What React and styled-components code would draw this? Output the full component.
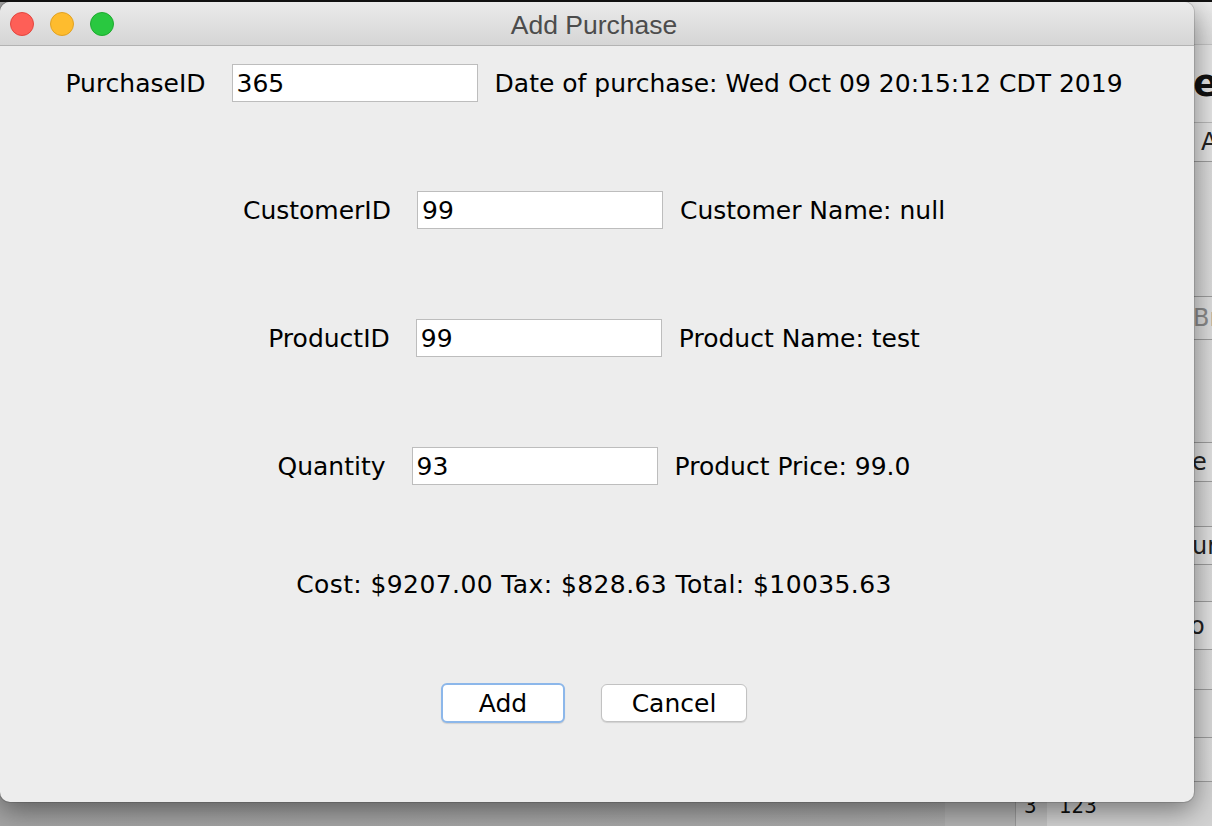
import React from "react";
import styled, { createGlobalStyle } from "styled-components";

const Global = createGlobalStyle`
  html, body { margin: 0; padding: 0; }
  body { width: 1212px; height: 826px; overflow: hidden; background: #a6a6a6; }
`;

const Desktop = styled.div`
  position: relative;
  width: 1212px;
  height: 826px;
  overflow: hidden;
  background: linear-gradient(90deg, #a4a4a4 0%, #a9a9a9 70%, #b4b4b4 100%);
  border-top: 2px solid #111;
  box-sizing: border-box;
`;

/* background application window, mostly hidden behind the dialog */
const BackWindow = styled.div`
  position: absolute;
  left: 945px;
  top: -2px;
  width: 320px;
  height: 840px;
  background: linear-gradient(90deg, #b8b8b8, #d8d8d8);
  display: flex;
  flex-direction: column;
  font-family: "DejaVu Sans", sans-serif;
`;

const BackTitle = styled.div`
  height: 44px;
  flex: none;
  background: linear-gradient(#ececec, #dcdcdc);
  border-bottom: 1px solid #c4c4c4;
`;

const BackHeading = styled.div`
  height: 77px;
  flex: none;
  background: #e4e4e4;
  border-bottom: 1px solid #b8b8b8;
  font-size: 38px;
  font-weight: bold;
  line-height: 77px;
  padding-left: 248px;
  color: #111;
  white-space: nowrap;
`;

const BackRow = styled.div`
  height: ${(p) => p.$h}px;
  flex: none;
  box-sizing: border-box;
  border-bottom: 1px solid #9c9c9c;
  background: ${(p) => p.$bg || "linear-gradient(90deg, #c9c9c9, #dedede)"};
  color: ${(p) => (p.$muted ? "#8a8a8a" : "#222")};
  font-size: 24px;
  line-height: ${(p) => p.$h}px;
  padding-left: ${(p) => p.$pad || 250}px;
  white-space: nowrap;
`;

const BackTable = styled.div`
  flex: 1;
  display: flex;
  background: linear-gradient(90deg, #b4b4b4 0, #b4b4b4 70px, #c9c9c9 70px);
`;

const BackCell = styled.div`
  width: ${(p) => p.$w}px;
  flex: none;
  box-sizing: border-box;
  border-left: ${(p) => (p.$line ? "1px solid #9a9a9a" : "none")};
  background: ${(p) => p.$bg};
  padding: 11px 0 0 ${(p) => p.$pl}px;
  font-family: "DejaVu Sans Condensed", "DejaVu Sans", sans-serif;
  font-size: 22px;
  color: #111;
`;

const Dialog = styled.div`
  position: absolute;
  left: 0;
  top: 0;
  width: 1194px;
  height: 800px;
  background: #ededed;
  border-radius: 10px;
  box-shadow: 0 8px 28px rgba(0, 0, 0, 0.45), 0 0 0 1px rgba(0, 0, 0, 0.12);
  display: flex;
  flex-direction: column;
  overflow: hidden;
`;

const TitleBar = styled.div`
  height: 44px;
  flex: none;
  position: relative;
  display: flex;
  align-items: center;
  justify-content: center;
  background: linear-gradient(#ebebeb, #d5d5d5);
  border-bottom: 1px solid #b3b3b3;
  box-sizing: border-box;
`;

const Lights = styled.div`
  position: absolute;
  left: 10px;
  top: 10px;
  display: flex;
  gap: 16px;
`;

const Light = styled.span`
  width: 24px;
  height: 24px;
  border-radius: 50%;
  box-sizing: border-box;
  background: ${(p) => p.$c};
  border: 1px solid ${(p) => p.$b};
`;

const Title = styled.div`
  font-family: "Liberation Sans", Arial, sans-serif;
  font-size: 26.5px;
  color: #4c4c4c;
  margin: 4px 0 0 -6px;
`;

const Content = styled.div`
  flex: 1;
  display: flex;
  flex-direction: column;
  align-items: center;
  padding: 18px 6px 0 0;
  font-family: "DejaVu Sans", "Lucida Grande", sans-serif;
  font-size: 25px;
  color: #000;
`;

const Row = styled.div`
  display: flex;
  align-items: center;
  height: ${(p) => p.$h || 38}px;
  margin-top: ${(p) => p.$mt || 0}px;
  white-space: nowrap;
  letter-spacing: ${(p) => p.$ls || 0}px;
`;

const Label = styled.span`
  margin-right: 26px;
`;

const Field = styled.div`
  width: 246px;
  height: 38px;
  box-sizing: border-box;
  background: #fff;
  border: 1px solid #bdbdbd;
  display: flex;
  align-items: center;
  padding-left: 4px;
  margin-right: 17px;
`;

const Buttons = styled.div`
  display: flex;
  gap: 36px;
  margin-top: 80px;
  align-items: center;
`;

const Button = styled.button`
  width: ${(p) => p.$w}px;
  height: ${(p) => (p.$focus ? 40 : 38)}px;
  box-sizing: border-box;
  background: #fff;
  border: ${(p) => (p.$focus ? "2px solid #8cb7ea" : "1px solid #c2c2c2")};
  border-radius: 6px;
  box-shadow: 0 1px 1px rgba(0, 0, 0, 0.12);
  font-family: "DejaVu Sans", "Lucida Grande", sans-serif;
  font-size: 25px;
  color: #000;
  padding: 0;
`;

export default function App() {
  return (
    <>
      <Global />
      <Desktop>
        <BackWindow>
          <BackTitle />
          <BackHeading>er</BackHeading>
          <BackRow $h={39} $bg="#e2e2e2" $pad={256}>A</BackRow>
          <BackRow $h={135} />
          <BackRow $h={43} $muted $bg="#dddddd" $pad={248}>Br</BackRow>
          <BackRow $h={103} />
          <BackRow $h={39} $bg="#e0e0e0" $pad={247}>e S</BackRow>
          <BackRow $h={45} />
          <BackRow $h={38} $bg="#e0e0e0" $pad={247}>ure</BackRow>
          <BackRow $h={37} />
          <BackRow $h={48} $bg="#e2e2e2" $pad={245}>o</BackRow>
          <BackRow $h={40} />
          <BackRow $h={48} $bg="#d8d8d8" />
          <BackRow $h={44} />
          <BackTable>
            <BackCell $w={70} $pl={0} $bg="transparent" />
            <BackCell $w={32} $pl={8} $line $bg="#c2c2c2">3</BackCell>
            <BackCell $w={200} $pl={12} $bg="#d2d2d2">123</BackCell>
          </BackTable>
        </BackWindow>

        <Dialog>
          <TitleBar>
            <Lights>
              <Light $c="#fe5f57" $b="#e2463f" />
              <Light $c="#febc2e" $b="#e0a123" />
              <Light $c="#29c840" $b="#1eaa2f" />
            </Lights>
            <Title>Add Purchase</Title>
          </TitleBar>
          <Content>
            <Row>
              <Label>PurchaseID</Label>
              <Field>365</Field>
              <span>Date of purchase: Wed Oct 09 20:15:12 CDT 2019</span>
            </Row>
            <Row $mt={89}>
              <Label>CustomerID</Label>
              <Field>99</Field>
              <span>Customer Name: null</span>
            </Row>
            <Row $mt={90}>
              <Label>ProductID</Label>
              <Field>99</Field>
              <span>Product Name: test</span>
            </Row>
            <Row $mt={90}>
              <Label>Quantity</Label>
              <Field>93</Field>
              <span>Product Price: 99.0</span>
            </Row>
            <Row $mt={80} $ls={0.4}>
              <span>Cost: $9207.00 Tax: $828.63 Total: $10035.63</span>
            </Row>
            <Buttons>
              <Button $w={124} $focus>Add</Button>
              <Button $w={146}>Cancel</Button>
            </Buttons>
          </Content>
        </Dialog>
      </Desktop>
    </>
  );
}
